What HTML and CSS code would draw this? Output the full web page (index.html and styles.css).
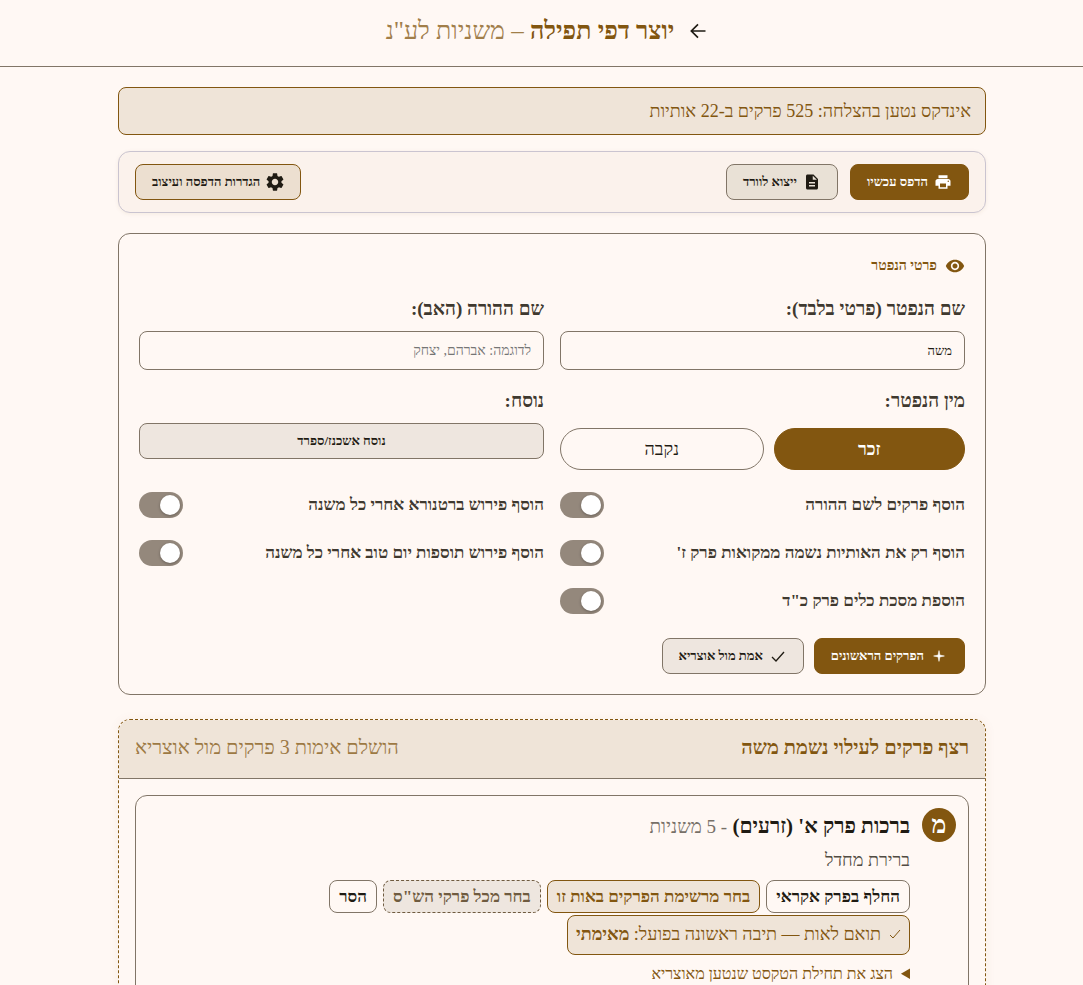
FILE: index.html
```html
<!DOCTYPE html>
<html lang="he" dir="rtl">
<head>
    <meta charset="UTF-8">
    <meta name="viewport" content="width=device-width, initial-scale=1.0">
    <title>יוצר דפי תפילה</title>
    <link rel="stylesheet" href="styles.css">
</head>
<body>
    <header class="top-bar">
        <button class="back" type="button" aria-label="חזרה">
            <svg viewBox="0 0 24 24" width="20" height="20"><path d="M21 12H4M12 4l-8 8 8 8" fill="none" stroke="currentColor" stroke-width="2"/></svg>
        </button>
        <h1>יוצר דפי תפילה <span>– משניות לע"נ</span></h1>
    </header>

    <main class="page">
        <div class="notice">אינדקס נטען בהצלחה: 525 פרקים ב-22 אותיות</div>

        <div class="toolbar">
            <button class="btn primary" type="button">
                <svg viewBox="0 0 24 24" width="18" height="18"><path fill="currentColor" d="M19 8H5c-1.66 0-3 1.34-3 3v6h4v4h12v-4h4v-6c0-1.66-1.34-3-3-3zm-3 11H8v-5h8v5zm3-7c-.55 0-1-.45-1-1s.45-1 1-1 1 .45 1 1-.45 1-1 1zm-1-9H6v4h12V3z"/></svg>
                הדפס עכשיו
            </button>
            <button class="btn" type="button">
                <svg viewBox="0 0 24 24" width="18" height="18"><path fill="currentColor" d="M14 2H6c-1.1 0-2 .9-2 2v16c0 1.1.9 2 2 2h12c1.1 0 2-.9 2-2V8l-6-6zm2 16H8v-2h8v2zm0-4H8v-2h8v2zm-3-5V3.500L18.500 9H13z"/></svg>
                ייצוא לוורד
            </button>
            <button class="btn settings" type="button">
                <svg viewBox="2 2 20 20" width="18" height="18"><path fill="currentColor" d="M19.140 12.940c.04-.3.06-.61.06-.94 0-.32-.02-.64-.07-.94l2.030-1.580c.18-.14.23-.41.12-.61l-1.920-3.320c-.12-.22-.37-.29-.59-.22l-2.390.96c-.5-.38-1.030-.7-1.620-.94l-.36-2.540c-.04-.24-.24-.41-.48-.41h-3.840c-.24 0-.43.17-.47.41l-.36 2.540c-.59.24-1.130.57-1.620.94l-2.390-.96c-.22-.08-.47 0-.59.22L2.740 8.870c-.12.21-.08.47.12.61l2.030 1.580c-.05.3-.09.63-.09.94s.02.64.07.94l-2.030 1.580c-.18.14-.23.41-.12.61l1.920 3.320c.12.22.37.29.59.22l2.390-.96c.5.38 1.030.7 1.620.94l.36 2.540c.05.24.24.41.48.41h3.840c.24 0 .44-.17.47-.41l.36-2.540c.59-.24 1.130-.56 1.620-.94l2.390.96c.22.08.47 0 .59-.22l1.920-3.320c.12-.22.07-.47-.12-.61l-2.010-1.580zM12 15.600c-1.980 0-3.600-1.620-3.600-3.600s1.620-3.600 3.600-3.600 3.600 1.620 3.600 3.600-1.620 3.600-3.600 3.600z"/></svg>
                הגדרות הדפסה ועיצוב
            </button>
        </div>

        <section class="card">
            <h2 class="card-title">
                <svg viewBox="0 0 24 24" width="20" height="20"><path fill="currentColor" d="M12 4.500C7 4.500 2.730 7.610 1 12c1.730 4.390 6 7.500 11 7.500s9.270-3.110 11-7.500c-1.730-4.390-6-7.500-11-7.500zM12 17c-2.760 0-5-2.240-5-5s2.240-5 5-5 5 2.240 5 5-2.240 5-5 5zm0-8c-1.660 0-3 1.340-3 3s1.340 3 3 3 3-1.340 3-3-1.340-3-3-3z"/></svg>
                פרטי הנפטר
            </h2>
            <div class="form-grid">
                <div class="field">
                    <label for="niftar">שם הנפטר (פרטי בלבד):</label>
                    <input id="niftar" type="text" value="משה">
                </div>
                <div class="field">
                    <label for="parent">שם ההורה (האב):</label>
                    <input id="parent" type="text" placeholder="לדוגמה: אברהם, יצחק">
                </div>
                <div class="field">
                    <span class="label" id="gender-label">מין הנפטר:</span>
                    <div class="gender" role="group" aria-labelledby="gender-label">
                        <button class="male" type="button" aria-pressed="true">זכר</button>
                        <button class="female" type="button" aria-pressed="false">נקבה</button>
                    </div>
                </div>
                <div class="field">
                    <label for="nusach">נוסח:</label>
                    <button id="nusach" class="nusach" type="button">נוסח אשכנז/ספרד</button>
                </div>
                <label class="toggle">הוסף פרקים לשם ההורה <input type="checkbox"></label>
                <label class="toggle">הוסף פירוש ברטנורא אחרי כל משנה <input type="checkbox"></label>
                <label class="toggle">הוסף רק את האותיות נשמה ממקואות פרק ז' <input type="checkbox"></label>
                <label class="toggle">הוסף פירוש תוספות יום טוב אחרי כל משנה <input type="checkbox"></label>
                <label class="toggle">הוספת מסכת כלים פרק כ"ד <input type="checkbox"></label>
            </div>
            <div class="card-actions">
                <button class="btn primary" type="button">
                    <svg viewBox="0 0 20 20" width="18" height="18"><path fill="currentColor" d="M10 4l1 5 5 1-5 1-1 5-1-5-5-1 5-1z" stroke="currentColor" stroke-width=".6"/></svg>
                    הפרקים הראשונים
                </button>
                <button class="btn verify" type="button">
                    <svg viewBox="0 0 18 18" width="18" height="18"><path d="M3 10l4 4 8-9" fill="none" stroke="currentColor" stroke-width="1.300"/></svg>
                    אמת מול אוצריא
                </button>
            </div>
        </section>

        <section class="sequence">
            <div class="sequence-head">
                <h2>רצף פרקים לעילוי נשמת משה</h2>
                <span>הושלם אימות 3 פרקים מול אוצריא</span>
            </div>
            <article class="chapter">
                <div class="letter">מ</div>
                <div class="chapter-body">
                    <h3>ברכות פרק א' (זרעים) <span>- 5 משניות</span></h3>
                    <p>ברירת מחדל</p>
                    <div class="chips">
                        <button class="chip" type="button">החלף בפרק אקראי</button>
                        <button class="chip tinted" type="button">בחר מרשימת הפרקים באות זו</button>
                        <button class="chip dashed" type="button">בחר מכל פרקי הש"ס</button>
                        <button class="chip" type="button">הסר</button>
                    </div>
                    <div class="match">
                        <svg viewBox="0 0 12 12" width="12" height="12"><path d="M1 7l3 3 7-8" fill="none" stroke="currentColor"/></svg>
                        <span>תואם לאות — תיבה ראשונה בפועל: <b>מאימתי</b></span>
                    </div>
                    <details>
                        <summary>הצג את תחילת הטקסט שנטען מאוצריא</summary>
                    </details>
                </div>
            </article>
        </section>
    </main>
</body>
</html>
```
FILE: styles.css
```css
:root {
    --primary: #825610;
    --bg: #fff8f4;
    --text: #1f1b13;
    --text-soft: #3f392f;
    --outline: #817567;
    --tint: #efe4d8;
    --surface: #eee6df;
}

* {
    box-sizing: border-box;
}

body {
    margin: 0;
    background: var(--bg);
    color: var(--text);
    font-family: "Liberation Serif", serif;
    font-size: 18px;
    line-height: 26px;
    height: 100vh;
    overflow: hidden;
}

h1, h2, h3, p {
    margin: 0;
}

button, input {
    font-family: inherit;
    color: inherit;
}

button {
    cursor: pointer;
}

svg {
    flex: none;
}

/* header */
.top-bar {
    display: flex;
    align-items: center;
    justify-content: center;
    gap: 14px;
    height: 67px;
    padding: 0 0 4px 11px;
    border-bottom: 1px solid var(--outline);
}

.top-bar h1 {
    font-size: 25px;
    line-height: 32px;
    color: var(--primary);
}

.top-bar h1 span {
    font-weight: normal;
    opacity: .75;
}

.back {
    display: flex;
    padding: 0;
    border: 0;
    background: none;
}

.page {
    max-width: 889px;
    margin: 20px auto 0;
    padding-left: 21px;
}

.notice {
    padding: 10px 14px;
    border: 1px solid var(--primary);
    border-radius: 8px;
    background: var(--tint);
    color: var(--primary);
}

/* buttons */
.toolbar {
    display: flex;
    gap: 12px;
    margin-top: 16px;
    padding: 12px 16px;
    border: 1px solid #cac4d0;
    border-radius: 12px;
    background: #fbf2ec;
    box-shadow: 0 1px 4px rgba(130, 86, 16, .08);
}

.btn {
    display: inline-flex;
    align-items: center;
    gap: 6px;
    height: 36px;
    padding: 0 16px;
    border: 1px solid var(--outline);
    border-radius: 8px;
    background: #e9e1d6;
    font-size: 13px;
    font-weight: bold;
}

.btn.primary {
    border-color: var(--primary);
    background: var(--primary);
    color: #fff;
}

.btn.settings {
    margin-right: auto;
    border-color: var(--primary);
    background: #ecdfd0;
}

.btn.verify {
    background: var(--surface);
}

/* form */
.card {
    margin-top: 20px;
    padding: 20px;
    border: 1px solid var(--outline);
    border-radius: 12px;
}

.card-title {
    display: flex;
    align-items: center;
    gap: 8px;
    margin-bottom: 18px;
    color: var(--primary);
    font-size: 14px;
    line-height: 24px;
}

.form-grid {
    display: grid;
    grid-template-columns: 1fr 1fr;
    gap: 18px 16px;
}

.field {
    display: flex;
    flex-direction: column;
    gap: 9px;
}

.field label,
.field .label {
    color: var(--text-soft);
    font-size: 19px;
    font-weight: bold;
}

.field input {
    width: 100%;
    height: 39px;
    padding: 0 12px;
    border: 1px solid var(--outline);
    border-radius: 8px;
    background: var(--bg);
    font-size: 13px;
}

.field input::placeholder {
    color: #757575;
    font-size: 14px;
}

.gender {
    display: flex;
    gap: 10px;
    padding: 5px 0 2px;
}

.gender button {
    height: 42px;
    border: 1px solid var(--outline);
    border-radius: 21px;
    background: var(--bg);
    font-size: 18px;
}

.gender .male {
    flex: 191;
    border-color: var(--primary);
    background: var(--primary);
    color: #fff;
    font-weight: bold;
}

.gender .female {
    flex: 204;
}

.nusach {
    height: 36px;
    border: 1px solid var(--outline);
    border-radius: 8px;
    background: var(--surface);
    font-size: 13px;
    font-weight: bold;
}

.toggle {
    display: flex;
    align-items: center;
    justify-content: space-between;
    height: 30px;
    color: var(--text-soft);
    font-size: 17px;
    font-weight: bold;
}

.toggle input {
    appearance: none;
    display: flex;
    align-items: center;
    width: 44px;
    height: 26px;
    margin: 0;
    padding: 3px;
    border-radius: 13px;
    background: #94887c;
    cursor: pointer;
}

.toggle input::before {
    content: "";
    width: 20px;
    height: 20px;
    border-radius: 50%;
    background: #fff;
    box-shadow: 0 1px 3px rgba(0, 0, 0, .3);
}

.toggle input:checked {
    justify-content: flex-end;
    background: var(--primary);
}

.card-actions {
    display: flex;
    gap: 10px;
    margin-top: 22px;
}

/* chapters */
.sequence {
    margin-top: 24px;
    border: 1px dashed var(--primary);
    border-radius: 12px;
    box-shadow: 0 1px 12px rgba(130, 86, 16, .06);
    overflow: hidden;
}

.sequence-head {
    display: flex;
    justify-content: space-between;
    padding: 14px 16px 18px;
    border-bottom: 1px solid var(--outline);
    background: var(--tint);
    color: var(--primary);
    font-size: 20px;
}

.sequence-head h2 {
    font-size: 20px;
}

.sequence-head span {
    opacity: .75;
}

.chapter {
    display: flex;
    gap: 12px;
    min-height: 300px;
    margin: 16px;
    padding: 12px;
    border: 1px solid var(--outline);
    border-radius: 12px;
}

.letter {
    flex: none;
    width: 34px;
    height: 34px;
    border-radius: 50%;
    background: var(--primary);
    color: #fff;
    font-size: 25px;
    font-weight: bold;
    line-height: 34px;
    text-align: center;
}

.chapter h3 {
    font-size: 21px;
    line-height: 36px;
}

.chapter h3 span {
    color: #777068;
    font-size: 19px;
    font-weight: normal;
}

.chapter p {
    margin-top: 2px;
    color: #514b42;
}

.chips {
    display: flex;
    flex-wrap: wrap;
    gap: 6px;
    margin: 7px 0 2px;
}

.chip {
    height: 33px;
    padding: 0 9px;
    border: 1px solid var(--outline);
    border-radius: 8px;
    background: var(--bg);
    font-size: 17px;
    font-weight: bold;
}

.chip.tinted {
    border-color: var(--primary);
    background: var(--tint);
    color: var(--primary);
}

.chip.dashed {
    border: 1px dashed #6f5b40;
    background: var(--surface);
    color: #6f5b40;
}

.match {
    display: flex;
    align-items: center;
    gap: 8px;
    width: fit-content;
    height: 40px;
    padding: 0 8px 2px;
    border: 1px solid var(--primary);
    border-radius: 8px;
    background: var(--tint);
    color: var(--primary);
}

.chapter summary {
    margin-top: 6px;
    color: var(--primary);
    font-size: 16px;
    cursor: pointer;
}
```
